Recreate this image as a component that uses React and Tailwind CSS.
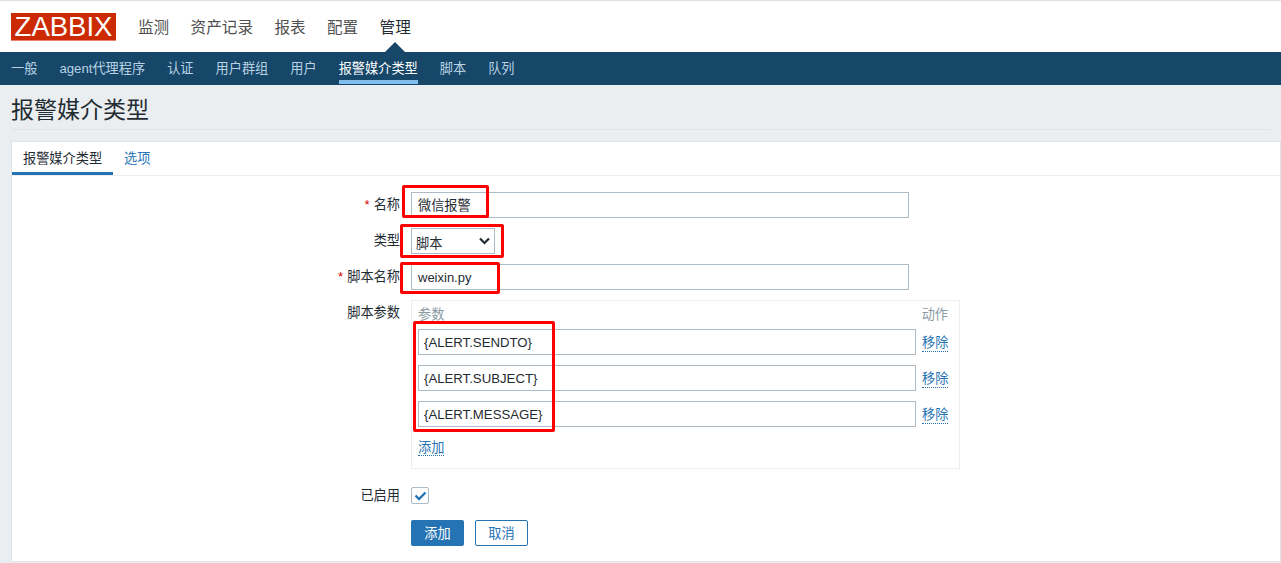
const FONT = "font-['Liberation_Sans','Noto_Sans_CJK_SC',sans-serif]"

const mainMenu = ['监测', '资产记录', '报表', '配置', '管理']
const subMenu = ['一般', 'agent代理程序', '认证', '用户群组', '用户', '报警媒介类型', '脚本', '队列']
const params = ['{ALERT.SENDTO}', '{ALERT.SUBJECT}', '{ALERT.MESSAGE}']

function Label({ children, required, className = '' }) {
  return (
    <div className={`w-[400px] shrink-0 text-right text-[13.2px] leading-[18px] text-[#1f2c33] ${className}`}>
      {required && <span className="mr-[4px] text-[#d40000]">*</span>}
      {children}
    </div>
  )
}

function RedBox({ className }) {
  return <div className={`absolute rounded-[2px] border-[3px] border-[#ff0000] ${className}`} />
}

export default function App() {
  return (
    <div className={`${FONT} relative h-[563px] w-[1281px] overflow-hidden bg-[#ebeef0]`}>
      <div className="h-[52px] border-t border-[#dfe1e2] bg-white">
        <div className="flex items-start pl-[11px] pt-[12px]">
          <div className="flex h-[28px] w-[105px] items-center justify-center border-b border-[#e8836a] bg-[#cc2a00] text-[27.5px] leading-none text-white">ZABBIX</div>
          <div className="ml-[22px] flex gap-[21.4px] pt-[4px] text-[15.6px] leading-[22px] text-[#4f4f4f]">
            {mainMenu.map((m) => (
              <span key={m} className={m === '管理' ? 'text-[#1f2c33]' : ''}>{m}</span>
            ))}
          </div>
        </div>
      </div>
      <div className="relative flex h-[33px] items-start gap-[22px] bg-[#164668] pl-[11px] pt-[7px] text-[13.2px] leading-[20px] text-[#b9d2e3]">
        <div className="absolute left-[385px] top-[-10px] h-0 w-0 border-x-[10px] border-b-[10px] border-x-transparent border-b-[#164668]" />
        {subMenu.map((m) => (
          <span key={m} className={m === '报警媒介类型' ? 'h-[25px] border-b-[4px] border-[#80bdeb] text-white' : ''}>{m}</span>
        ))}
      </div>
      <div className="mx-[11px] h-[45px] border-b border-[#dfe4e7] pt-[10px] text-[23px] leading-[30px] text-[#1f2c33]">报警媒介类型</div>
      <div className="ml-[11px] mt-[11px] h-[421px] border border-[#dfe4e7] bg-white">
        <div className="flex h-[34px] border-b border-[#ebeef0] text-[13.2px] leading-[20px]">
          <div className="h-[33px] w-[101px] border-b-[3px] border-[#2673b4] pl-[11px] pt-[7px] text-[#1f2c33]">报警媒介类型</div>
          <div className="ml-[11px] pt-[7px] text-[#2673b4]">选项</div>
        </div>
        <div className="-ml-[12px] pt-[16px]">
          <div className="flex items-start">
            <Label required className="pt-[4px]">名称</Label>
            <div className="ml-[11px] h-[26px] w-[498px] border border-[#acbbc4] px-[6px] pt-[1px] text-[13.2px] leading-[24px] text-[#1f2c33]">微信报警</div>
          </div>
          <div className="mt-[10px] flex items-start">
            <Label className="pt-[4px]">类型</Label>
            <div className="ml-[11px] flex h-[26px] w-[84px] items-center justify-between border border-[#acbbc4] px-[4px] pt-[6px] text-[13.2px] text-[#1f2c33]">
              脚本
              <svg width="11" height="8" viewBox="0 0 11 8" fill="none" stroke="#1f2c33" strokeWidth="2.2" className="-mt-[6px]"><path d="M1 1.5l4.5 4.5L10 1.5" /></svg>
            </div>
          </div>
          <div className="mt-[10px] flex items-start">
            <Label required className="pt-[4px]">脚本名称</Label>
            <div className="ml-[11px] h-[26px] w-[498px] border border-[#acbbc4] px-[6px] pt-[1px] text-[13px] leading-[24px] text-[#1f2c33]">weixin.py</div>
          </div>
          <div className="mt-[10px] flex items-start">
            <Label className="pt-[4px]">脚本参数</Label>
            <div className="ml-[11px] h-[169px] w-[549px] border border-[#ebeef0] px-[6px]">
              <div className="flex h-[28px] items-center justify-between pr-[5px] text-[13.2px] text-[#8c9ba3]">
                <span>参数</span>
                <span>动作</span>
              </div>
              {params.map((p) => (
                <div key={p} className="mb-[10px] flex items-center">
                  <div className="h-[26px] w-[498px] border border-[#acbbc4] px-[5px] pt-[1px] text-[13.2px] leading-[24px] text-[#1f2c33]">{p}</div>
                  <span className="ml-[6px] mt-[2px] border-b border-dotted border-[#2673b4] text-[13.2px] leading-[16px] text-[#2673b4]">移除</span>
                </div>
              ))}
              <span className="relative -top-[2px] border-b border-dotted border-[#2673b4] text-[13.2px] leading-[16px] text-[#2673b4]">添加</span>
            </div>
          </div>
          <div className="mt-[18px] flex items-start">
            <Label>已启用</Label>
            <div className="ml-[11px] flex h-[17px] w-[18px] items-center justify-center rounded-[2px] border border-[#acbbc4]">
              <svg width="13" height="10" viewBox="0 0 13 10" fill="none" stroke="#2673b4" strokeWidth="2.4"><path d="M1.5 4.5l3.5 3.5 6.5-6.5" /></svg>
            </div>
          </div>
          <div className="ml-[411px] mt-[15px] flex gap-[11px] text-[13.2px]">
            <div className="flex h-[26px] w-[53px] items-center justify-center rounded-[2px] bg-[#2673b4] pt-[2px] text-white">添加</div>
            <div className="flex h-[26px] w-[53px] items-center justify-center rounded-[2px] border border-[#2673b4] pt-[2px] text-[#2673b4]">取消</div>
          </div>
        </div>
      </div>
      <RedBox className="left-[402px] top-[185px] h-[33px] w-[87px]" />
      <RedBox className="left-[400px] top-[224px] h-[34px] w-[104px]" />
      <RedBox className="left-[400px] top-[262px] h-[32px] w-[100px]" />
      <RedBox className="left-[413px] top-[321px] h-[111px] w-[142px]" />
    </div>
  )
}
